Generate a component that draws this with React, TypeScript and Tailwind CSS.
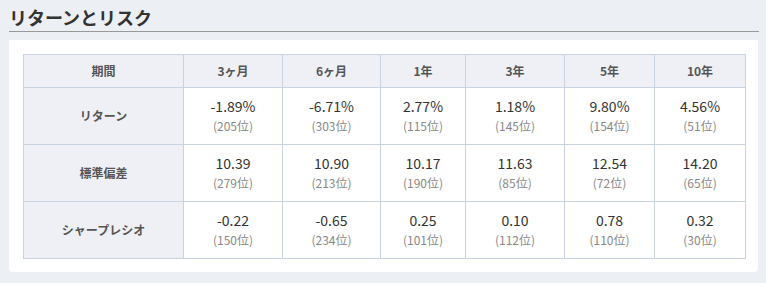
import React from "react";

const periods = ["3ヶ月", "6ヶ月", "1年", "3年", "5年", "10年"];

const rows: { label: string; cells: [string, string][] }[] = [
  {
    label: "リターン",
    cells: [
      ["-1.89%", "205"],
      ["-6.71%", "303"],
      ["2.77%", "115"],
      ["1.18%", "145"],
      ["9.80%", "154"],
      ["4.56%", "51"],
    ],
  },
  {
    label: "標準偏差",
    cells: [
      ["10.39", "279"],
      ["10.90", "213"],
      ["10.17", "190"],
      ["11.63", "85"],
      ["12.54", "72"],
      ["14.20", "65"],
    ],
  },
  {
    label: "シャープレシオ",
    cells: [
      ["-0.22", "150"],
      ["-0.65", "234"],
      ["0.25", "101"],
      ["0.10", "112"],
      ["0.78", "110"],
      ["0.32", "30"],
    ],
  },
];

const colWidths = ["w-[160px]", "w-[99px]", "w-[98px]", "w-[85px]", "w-[99px]", "w-[90px]", "w-[91px]"];

export default function App() {
  return (
    <div
      className="min-h-screen bg-[#eceff4] px-[9px] pt-[5px]"
      style={{ fontFamily: '"Noto Sans CJK JP", "Noto Sans", sans-serif' }}
    >
      <h2 className="w-[750px] border-b border-[#999] pb-[2px] text-[18px] font-bold leading-[24px] text-[#333]">
        リターンとリスク
      </h2>
      <div className="mt-[8px] w-[749px] rounded-b-[4px] bg-white px-[14px] pt-[14px] pb-[13px]">
        <table className="w-[722px] table-fixed border-collapse">
          <colgroup>
            {colWidths.map((w, i) => (
              <col key={i} className={w} />
            ))}
          </colgroup>
          <thead>
            <tr className="h-[33px] bg-[#eef0f5]">
              <th className="border border-[#c9d3e0] text-[12px] font-bold text-[#555]">期間</th>
              {periods.map((p) => (
                <th key={p} className="border border-[#c9d3e0] text-[12px] font-bold text-[#555]">
                  {p}
                </th>
              ))}
            </tr>
          </thead>
          <tbody>
            {rows.map((row) => (
              <tr key={row.label} className="h-[57px]">
                <th className="border border-[#c9d3e0] bg-[#eef0f5] text-[12px] font-bold text-[#555]">
                  {row.label}
                </th>
                {row.cells.map(([v, r], i) => (
                  <td key={i} className="border border-[#c9d3e0] text-center">
                    <div className="text-[14px] leading-[20px] text-[#333]">{v}</div>
                    <div className="text-[12px] leading-[20px] text-[#888]">({r}位)</div>
                  </td>
                ))}
              </tr>
            ))}
          </tbody>
        </table>
      </div>
    </div>
  );
}
